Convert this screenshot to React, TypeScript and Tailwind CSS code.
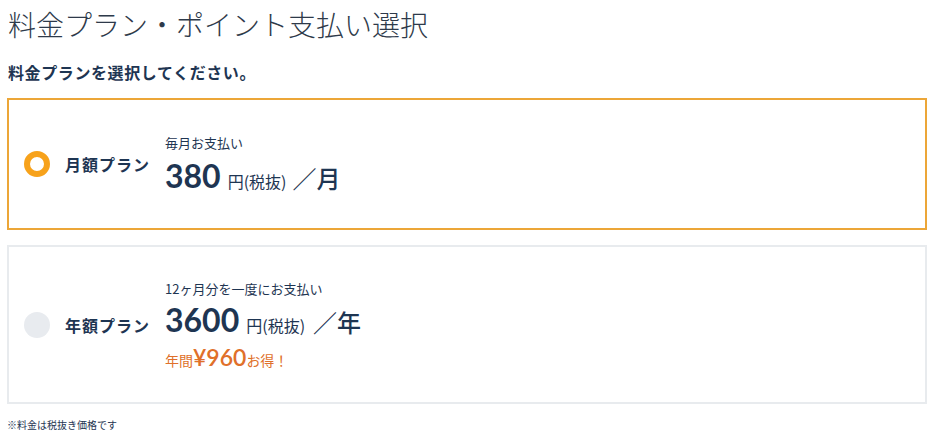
import React from "react";

const jp = { fontFamily: '"Noto Sans CJK JP", "Noto Sans", sans-serif' };
const num = { fontFamily: 'Lato, "Noto Sans CJK JP", sans-serif' };

export default function App() {
  return (
    <div className="bg-white w-[937px] h-[440px] px-[7px] text-[#1e3552]" style={jp}>
      <h1 className="pt-[6px] text-[28px] leading-[36px] font-light text-[#2e3a4a] pl-[1px]">
        料金プラン・ポイント支払い選択
      </h1>
      <p className="mt-[19px] text-[16px] leading-[22px] font-bold tracking-[0.6px] pl-[1px]">料金プランを選択してください。</p>
      <div className="mt-[15px] flex flex-col gap-[15px] w-[920px]">
        <div className="h-[132px] border-2 border-[#eca638] flex items-center">
          <div className="ml-[15px] w-[26px] h-[26px] rounded-full border-[6px] border-[#f7a21b] bg-white" />
          <div className="ml-[15px] w-[85px] text-[16px] font-bold tracking-[1px]">月額プラン</div>
          <div className="ml-[15px] flex flex-col pt-[2px]">
            <div className="text-[13px] leading-[18px]">毎月お支払い</div>
            <div className="mt-[6px] flex items-baseline">
              <span className="text-[32px] leading-[36px] font-bold" style={num}>380</span>
              <span className="ml-[7px] text-[16px]">円(税抜)</span>
              <span className="ml-[6px] text-[24px] font-medium">／月</span>
            </div>
          </div>
        </div>
        <div className="h-[159px] border-2 border-[#e8ebee] flex items-center">
          <div className="ml-[15px] w-[26px] h-[26px] rounded-full bg-[#e8ebef]" />
          <div className="ml-[15px] w-[85px] text-[16px] font-bold tracking-[1px]">年額プラン</div>
          <div className="ml-[15px] flex flex-col pt-[3px]">
            <div className="text-[13px] leading-[18px]">12ヶ月分を一度にお支払い</div>
            <div className="mt-[4px] flex items-baseline">
              <span className="text-[32px] leading-[36px] font-bold" style={num}>3600</span>
              <span className="ml-[7px] text-[16px]">円(税抜)</span>
              <span className="ml-[8px] text-[24px] font-medium">／年</span>
            </div>
            <div className="mt-[4px] flex items-baseline text-[#e0702a] leading-[26px]">
              <span className="text-[14px]">年間</span>
              <span className="text-[23px] font-semibold" style={num}>¥960</span>
              <span className="text-[14px]">お得！</span>
            </div>
          </div>
        </div>
      </div>
      <p className="mt-[14px] text-[10px] leading-[14px]">※料金は税抜き価格です</p>
    </div>
  );
}
